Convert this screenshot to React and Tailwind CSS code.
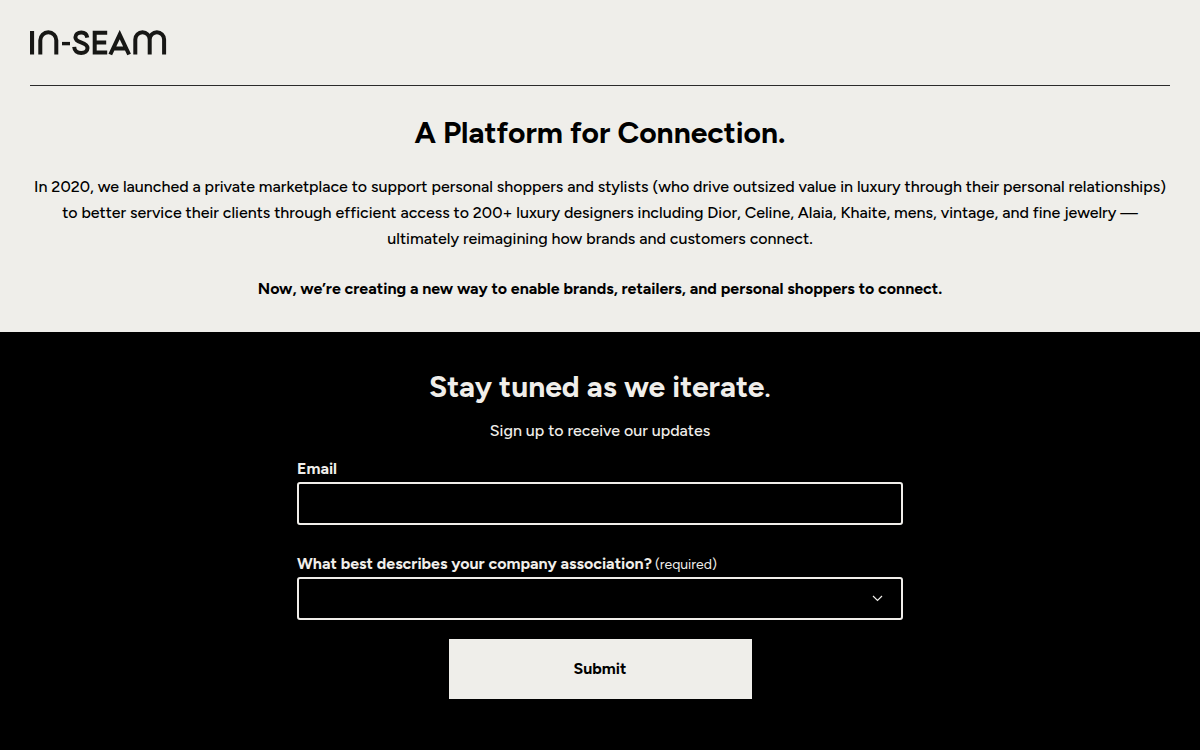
function Logo() {
  return (
    <svg width="137" height="26" viewBox="0 0 137 26" fill="none" stroke="#171715" strokeWidth="4" role="img" aria-label="In-Seam">
      <path d="M2 1V24.5" strokeWidth="4.2" />
      <path d="M10.3 24.5V10.2a8 8 0 0 1 16 0V24.5" />
      <path d="M32 13.600H40" strokeWidth="3.4" />
      <path d="M57.300 7.600C56.800 4.300 54.500 2.500 51.300 2.500c-3.500 0-5.900 1.900-5.900 4.800 0 3 2.500 4.100 5.600 5.100 3.800 1.300 6.500 2.500 6.500 5.700 0 3.100-2.700 5-6.300 5-4 0-6.800-2.300-7-6.200" />
      <path d="M77.200 2.800H64.700V22.600H77.200M64.700 12.600H76.200" />
      <path d="M80.300 24.500L89.700 4.600L99.100 24.500M84 18.600H95.400" />
      <path d="M105.300 24.500V9.400a7.200 7.200 0 0 1 14.400 0V24.500M119.700 9.400a7.200 7.200 0 0 1 14.400 0V24.500" />
    </svg>
  );
}

const fieldClass =
  "block h-[43px] w-full appearance-none rounded-[3px] border-2 border-[#f0eeea] bg-black px-3 text-base text-[#f0eeea]";

export default function App() {
  return (
    <div className="flex min-h-screen flex-col bg-black font-['Figtree','Lato',sans-serif] text-base leading-[26px]">
      <div className="bg-[#efeeea] px-[30px] pb-[30px] text-center text-black">
        <header className="flex border-b border-[#2b2b2b] pt-[30px] pb-[29px]">
          <a href="#home">
            <Logo />
          </a>
        </header>
        <h1 className="pt-7 text-[30px] leading-[38px] font-bold">A Platform for Connection.</h1>
        <p className="pt-[22px] font-medium">
          In 2020, we launched a private marketplace to support personal shoppers and stylists (who drive outsized value
          in luxury through their personal relationships) to better service their clients through efficient access to
          200+ luxury designers including Dior, Celine, Alaia, Khaite, mens, vintage, and fine jewelry — ultimately
          reimagining how brands and customers connect.
        </p>
        <p className="pt-6 font-bold">
          Now, we’re creating a new way to enable brands, retailers, and personal shoppers to connect.
        </p>
      </div>
      <main className="flex flex-col items-center px-[30px] pt-9 pb-[50px] text-[#f0eeea]">
        <h2 className="text-[30px] leading-[38px] font-bold">
          Stay tuned as we iterate<span className="font-medium">.</span>
        </h2>
        <p className="pt-3 font-medium">Sign up to receive our updates</p>
        <form className="flex w-full max-w-[606px] flex-col pt-3" onSubmit={(e) => e.preventDefault()}>
          <label htmlFor="email" className="font-bold">
            Email
          </label>
          <input id="email" type="email" className={fieldClass} />
          <label htmlFor="association" className="pt-[26px] font-bold">
            What best describes your company association?
            <span className="ml-[3px] text-sm font-normal">(required)</span>
          </label>
          <div className="grid items-center">
            <select id="association" required defaultValue="" className={`${fieldClass} col-start-1 row-start-1`}>
              <option value=""></option>
              <option>Brand</option>
              <option>Retailer</option>
              <option>Personal shopper</option>
            </select>
            <svg
              className="pointer-events-none col-start-1 row-start-1 mr-5 justify-self-end"
              width="11"
              height="7"
              viewBox="0 0 11 7"
              fill="none"
              stroke="#f0eeea"
              strokeWidth="1.2"
              aria-hidden="true"
            >
              <path d="M1 1l4.500 4.500L10 1" />
            </svg>
          </div>
          <button type="submit" className="mt-[19px] h-[60px] w-1/2 self-center bg-[#efeeea] font-bold text-black">
            Submit
          </button>
        </form>
      </main>
    </div>
  );
}
